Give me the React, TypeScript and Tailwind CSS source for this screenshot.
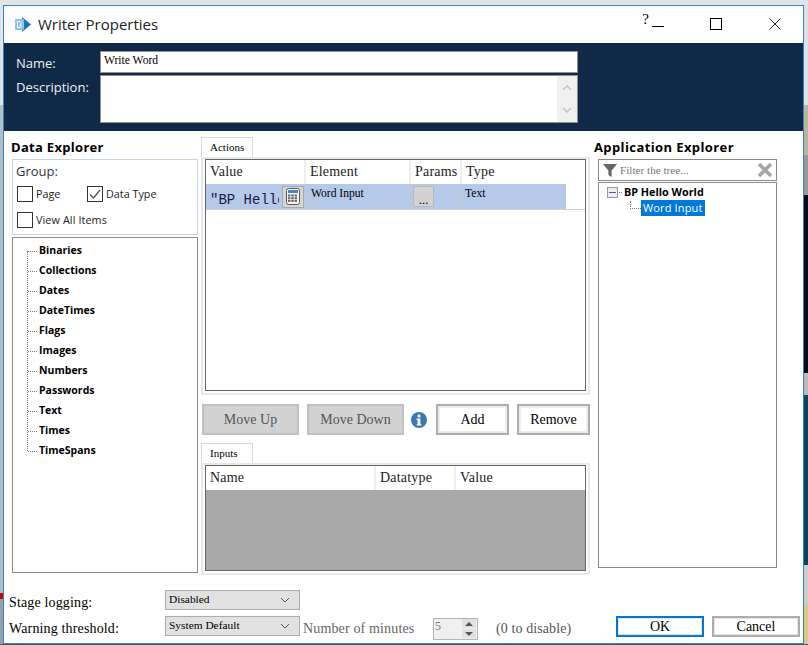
import React from 'react';

const serif = { fontFamily: '"Liberation Serif", serif' };

const Check = ({ checked }: { checked?: boolean }) => (
  <span className="flex h-4 w-4 shrink-0 items-center justify-center border border-[#333] bg-white">
    {checked && (
      <svg width="14" height="14" viewBox="0 0 14 14" fill="none" stroke="#555" strokeWidth="1.4">
        <path d="M2 7.5 5.5 11 12 3" />
      </svg>
    )}
  </span>
);

const TreeItem = ({ label }: { label: string }) => (
  <div className="flex h-5 items-center">
    <span className="mr-[2px] w-[9px] border-t border-dotted border-[#777]" />
    <span className="text-[10.5px] font-bold text-black">{label}</span>
  </div>
);

const HeadCell = ({ w, children }: { w: string; children: React.ReactNode }) => (
  <div className={`${w} flex h-full items-center border-r-2 border-[#eeeeee] pb-[1px] pl-1 text-[14px] tracking-[0.2px] text-[#222]`} style={serif}>
    {children}
  </div>
);

const Tab = ({ label }: { label: string }) => (
  <div className="flex h-5 w-[52px] items-center border border-b-0 border-[#d9d9d9] pl-2 text-[11px] text-black" style={serif}>
    {label}
  </div>
);

const GrayButton = ({ label, w }: { label: string; w: string }) => (
  <div className={`${w} flex h-[31px] items-center justify-center border-2 border-[#c0c0c0] bg-[#d2d2d2] pb-[1px] text-[14px] text-[#555]`} style={serif}>
    {label}
  </div>
);

const WhiteButton = ({ label, w, cls }: { label: string; w: string; cls?: string }) => (
  <div className={`${w} flex items-center justify-center pb-[1px] text-[14px] text-black ${cls ?? 'h-[31px] border-2 border-[#adadad] shadow-[inset_0_0_0_2px_#ededed]'}`} style={serif}>
    {label}
  </div>
);

const Combo = ({ value }: { value: string }) => (
  <div className="flex h-5 w-[135px] items-center justify-between border border-[#adadad] bg-[#e1e1e1] pb-[1px] pl-[3px] pr-[9px] text-[11.4px] text-black" style={serif}>
    {value}
    <svg width="10" height="6" viewBox="0 0 10 6" fill="none" stroke="#555" strokeWidth="1">
      <path d="M1 1l4 4 4-4" />
    </svg>
  </div>
);

const Logo = () => (
  <svg width="18" height="17" viewBox="0 0 18 17">
    <path d="M8 1l9 7.5L8 16z" fill="#1a76bb" />
    <rect x="1" y="3" width="9" height="11" rx="1" fill="#8cc4ea" />
    <path d="M3.5 5.5h2.6c1.4 0 1.4 2.6-.2 2.8 1.8.2 1.8 3.2 0 3.2H3.5z" fill="none" stroke="#fff" strokeWidth="1" />
  </svg>
);

const Calculator = () => (
  <svg width="14" height="17" viewBox="0 0 14 17">
    <rect x="0.5" y="0.5" width="13" height="16" rx="2" fill="#f4f4f4" stroke="#5a5a5a" />
    <rect x="2" y="2" width="10" height="3" fill="#4e86c4" />
    {[6.5, 9.2, 11.9].map((y) =>
      [2, 5.3, 8.6].map((x) => <rect key={`${x}-${y}`} x={x} y={y} width="2.4" height="2" fill="#666" />)
    )}
  </svg>
);

const App: React.FC = () => {
  return (
    <div className="flex h-[645px] w-[808px] flex-col overflow-hidden" style={{ fontFamily: '"Open Sans", sans-serif' }}>
      <div className="h-[5px] shrink-0 bg-[#e4e4e4]" />
      <div className="flex h-[639px] shrink-0">
        <div className="w-[3px] bg-[linear-gradient(to_bottom,#e4e4e4_0,#e4e4e4_100px,#b4bcc4_100px,#b4bcc4_588px,#d40000_588px,#d40000_594px,#9aa0a6_594px)]" />
        <div className="h-[639px] w-[801px] border border-[#2b86cf] bg-white">
          {/* title bar */}
          <div className="flex h-[37px] items-center pb-[2px]">
            <span className="ml-[10px] mr-[6px] mt-[2px] flex"><Logo /></span>
            <span className="mt-[1px] text-[15px] leading-none text-[#222]">Writer Properties</span>
            <span className="ml-auto mb-[9px] text-[15px] leading-none text-black" style={serif}>?</span>
            <span className="ml-[3px] mt-[5px] h-[1px] w-3 bg-black" />
            <span className="ml-[46px] h-3 w-3 border border-black" />
            <svg className="ml-[47px] mr-[22px]" width="12" height="12" viewBox="0 0 12 12" stroke="#222" strokeWidth="1">
              <path d="M.5.5l11 11M11.5.5l-11 11" />
            </svg>
          </div>

          {/* name + description band */}
          <div className="flex h-[88px] bg-[#0e2a47] pt-2">
            <div className="w-[96px] pl-3 text-[13px] leading-[21px] text-[#f0f0f0]">
              <div className="h-[25px] pt-[2px]">Name:</div>
              <div className="pt-[1px]">Description:</div>
            </div>
            <div className="flex w-[478px] flex-col gap-[2px]">
              <div className="flex h-[22px] items-center border border-[#8f8f8f] bg-white pb-[3px] pl-[3px] text-[11.6px] text-black" style={serif}>Write Word</div>
              <div className="flex h-[48px] justify-end border border-[#8f8f8f] bg-white">
                <div className="flex w-[20px] flex-col items-center justify-between bg-[#f0f0f0] py-[9px]">
                  <svg width="10" height="6" viewBox="0 0 10 6" fill="none" stroke="#c4c4c4" strokeWidth="1.5"><path d="M1 5l4-4 4 4" /></svg>
                  <svg width="10" height="6" viewBox="0 0 10 6" fill="none" stroke="#c4c4c4" strokeWidth="1.5"><path d="M1 1l4 4 4-4" /></svg>
                </div>
              </div>
            </div>
          </div>

          {/* main columns */}
          <div className="flex h-[459px]">
            <div className="ml-[8px] flex w-[186px] flex-col">
              <div className="-ml-[1px] mt-[7px] h-[21px] text-[13px] font-bold leading-[18px] tracking-[0.3px] text-black">Data Explorer</div>
              <div className="h-[76px] border border-[#c3d4e6] px-[3px] pt-[1px] text-[10.8px] text-[#222]">
                <div className="text-[13px] leading-[20px] text-[#333]">Group:</div>
                <div className="ml-[1px] mt-[4px] flex h-[17px] items-center gap-[3px]">
                  <Check /><span className="w-[48px] pt-[1px]">Page</span><Check checked /><span className="pt-[1px]">Data Type</span>
                </div>
                <div className="ml-[1px] mt-[9px] flex h-[17px] items-center gap-[3px]">
                  <Check /><span className="pt-[1px] tracking-[0.1px]">View All Items</span>
                </div>
              </div>
              <div className="mt-[2px] h-[336px] border border-[#8a8a8a] pt-[13px]">
                <div className="ml-[14px] flow-root h-[200px] border-l border-dotted border-[#777]">
                  <div className="-mt-[10px]">
                    {['Binaries', 'Collections', 'Dates', 'DateTimes', 'Flags', 'Images', 'Numbers', 'Passwords', 'Text', 'Times', 'TimeSpans'].map((t) => (
                      <TreeItem key={t} label={t} />
                    ))}
                  </div>
                </div>
              </div>
            </div>

            <div className="ml-[3px] flex w-[389px] flex-col">
              <div className="mt-[6px]"><Tab label="Actions" /></div>
              <div className="h-[238px] border-2 border-[#e8e8e8] px-[2px]">
                <div className="h-[232px] border border-[#666] bg-white">
                  <div className="flex h-6 items-center">
                    <HeadCell w="w-[100px]">Value</HeadCell>
                    <HeadCell w="w-[105px]">Element</HeadCell>
                    <HeadCell w="w-[51px]">Params</HeadCell>
                    <div className="pb-[1px] pl-1 text-[14px] tracking-[0.2px] text-[#222]" style={serif}>Type</div>
                  </div>
                  <div className="border-b border-[#cfcfcf]">
                    <div className="flex h-[25px] w-[360px] items-stretch bg-[#b4cae8] pl-[1px] text-[11.6px] text-black" style={serif}>
                      <div className="flex w-[99px] items-center justify-between border-r border-[#c8c8c8] pr-[1px]">
                        <span className="ml-[3px] mt-[7px] w-[69px] overflow-hidden whitespace-nowrap text-[14px] leading-[16px] text-[#1a1a4a]" style={{ fontFamily: '"Liberation Mono", monospace' }}>"BP Hello</span>
                        <span className="flex h-[22px] w-[22px] items-center justify-center border border-[#a9a9a9] bg-[#d6d6d6]"><Calculator /></span>
                      </div>
                      <div className="w-[105px] border-r border-[#c8c8c8] pl-[5px] pt-[1px]">Word Input</div>
                      <div className="flex w-[50px] items-center border-r border-[#c8c8c8] pl-[2px]">
                        <span className="flex h-[21px] w-[21px] items-center justify-center border border-[#b8b8b8] bg-[#d2d2d2] pt-[5px] text-[13px] leading-none">...</span>
                      </div>
                      <div className="pl-1 pt-[1px]">Text</div>
                    </div>
                  </div>
                </div>
              </div>

              <div className="ml-[1px] mt-[9px] flex items-center">
                <GrayButton label="Move Up" w="w-[97px]" />
                <span className="w-2" />
                <GrayButton label="Move Down" w="w-[97px]" />
                <svg className="ml-[7px] mr-[9px]" width="16" height="16" viewBox="0 0 16 16">
                  <circle cx="8" cy="8" r="8" fill="#3c78b4" />
                  <rect x="6.6" y="2.6" width="2.8" height="2.8" rx="1.2" fill="#fff" />
                  <path d="M5.6 6.6h3.8v5.6h1v1.3H5.6v-1.3h1V7.9h-1z" fill="#fff" />
                </svg>
                <WhiteButton label="Add" w="w-[73px]" />
                <span className="w-2" />
                <WhiteButton label="Remove" w="w-[73px]" />
              </div>

              <div className="mt-2"><Tab label="Inputs" /></div>
              <div className="h-[112px] border-2 border-[#e8e8e8] px-[2px]">
                <div className="flex h-[106px] flex-col border border-[#666] bg-white">
                  <div className="flex h-6 shrink-0 items-center">
                    <HeadCell w="w-[170px]">Name</HeadCell>
                    <HeadCell w="w-[80px]">Datatype</HeadCell>
                    <div className="pb-[1px] pl-1 text-[14px] tracking-[0.2px] text-[#222]" style={serif}>Value</div>
                  </div>
                  <div className="flex-1 bg-[#a9a9a9]" />
                </div>
              </div>
            </div>

            <div className="ml-[4px] flex w-[183px] flex-col">
              <div className="mt-[7px] h-[21px] text-[13px] font-bold leading-[18px] tracking-[0.4px] text-black">Application Explorer</div>
              <div className="ml-[4px] flex h-[22px] items-center border border-[#8a8a8a] pl-[4px] pr-[3px]">
                <svg width="14" height="14" viewBox="0 0 14 14"><path d="M0 1h14L8.6 7.5V14L5.4 12V7.5z" fill="#666" /></svg>
                <span className="ml-[3px] text-[11.2px] text-[#777]" style={serif}>Filter the tree...</span>
                <svg className="ml-auto" width="16" height="16" viewBox="0 0 16 16" stroke="#a6a6a6" strokeWidth="3.6"><path d="M2 2l12 12M14 2 2 14" /></svg>
              </div>
              <div className="ml-[4px] mt-[1px] h-[386px] border border-[#8a8a8a] pl-[8px] pt-[1px]">
                <div className="flex h-[16px] items-center">
                  <span className="flex h-[11px] w-[11px] items-center justify-center border border-[#9a9a9a] bg-[#eeeeee]"><span className="h-[1px] w-[7px] bg-[#3b5ea6]" /></span>
                  <span className="ml-[1px] mr-[2px] w-[3px] border-t border-dotted border-[#777]" />
                  <span className="text-[10.8px] font-bold text-black">BP Hello World</span>
                </div>
                <div className="flex h-[16px] items-center">
                  <span className="ml-[23px] mb-[6px] h-2 w-[11px] border-b border-l border-dotted border-[#777]" />
                  <span className="bg-[#0078d7] px-[2px] text-[11px] leading-[16px] tracking-[0.15px] text-white">Word Input</span>
                </div>
              </div>
            </div>
          </div>

          {/* footer */}
          <div className="flex h-[52px] flex-col">
            <div className="flex h-[26px] items-start">
              <span className="ml-[5px] w-[156px] pt-[4px] text-[14px] leading-[18px] tracking-[0.15px] text-black" style={serif}>Stage logging:</span>
              <Combo value="Disabled" />
            </div>
            <div className="flex items-start">
              <span className="ml-[5px] w-[156px] pt-[4px] text-[14px] leading-[18px] tracking-[0.15px] text-black" style={serif}>Warning threshold:</span>
              <Combo value="System Default" />
              <span className="ml-[3px] w-[130px] pt-[4px] text-[14px] leading-[18px] tracking-[0.15px] text-[#666]" style={serif}>Number of minutes</span>
              <div className="mt-[2px] flex h-[22px] w-[45px] justify-between border border-[#b5b5b5] bg-[#f0f0f0] pl-[1px] pr-[1px] text-[12px] leading-[14px] text-[#777]" style={serif}>
                5
                <div className="flex w-[14px] flex-col gap-[1px]">
                  <span className="flex h-[9px] items-center justify-center bg-[#e1e1e1]"><span className="h-0 w-0 border-x-[4px] border-b-[4px] border-x-transparent border-b-[#555]" /></span>
                  <span className="flex h-[9px] items-center justify-center bg-[#e1e1e1]"><span className="h-0 w-0 border-x-[4px] border-t-[4px] border-x-transparent border-t-[#555]" /></span>
                </div>
              </div>
              <span className="ml-[18px] w-[120px] pt-[4px] text-[14px] leading-[18px] tracking-[0.1px] text-[#555]" style={serif}>(0 to disable)</span>
              <WhiteButton label="OK" w="w-[88px]" cls="h-[21px] border-2 border-[#0078d7] shadow-[inset_0_0_0_1px_#e5e5e5]" />
              <span className="w-2" />
              <WhiteButton label="Cancel" w="w-[88px]" cls="h-[21px] border-2 border-[#adadad] shadow-[inset_0_0_0_1px_#e5e5e5]" />
            </div>
          </div>
        </div>
        <div className="w-[4px] bg-[linear-gradient(to_bottom,#e0e0e0_0,#e0e0e0_100px,#b9b5a0_100px,#b9b5a0_150px,#999999_150px,#999999_190px,#050a1e_190px,#050a1e_368px,#bbbbbb_368px,#bbbbbb_390px,#12405a_390px,#12405a_560px,#cccccc_560px,#cccccc_600px,#d9c98a_600px)]" />
      </div>
      <div className="h-[1px] shrink-0 bg-[#4d5862]" />
    </div>
  );
};

export default App;
